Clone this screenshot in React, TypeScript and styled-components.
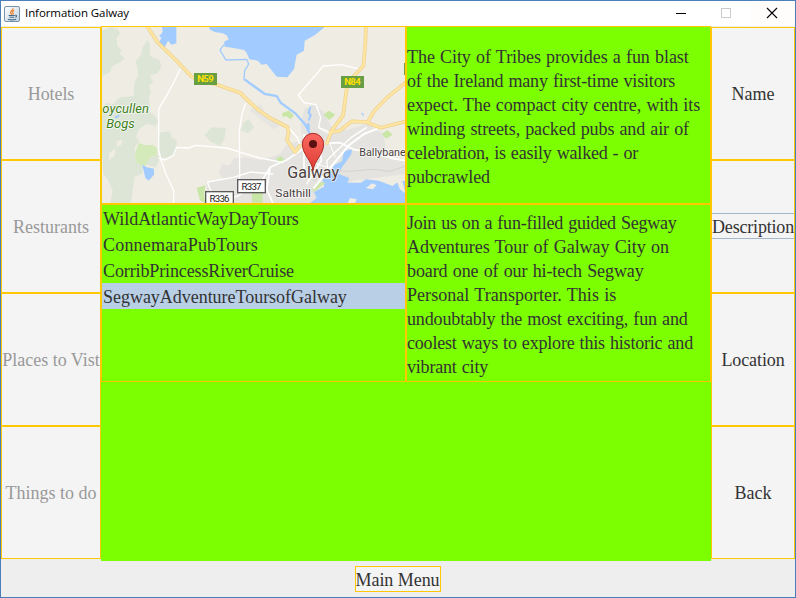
import React from 'react';
import styled, { createGlobalStyle } from 'styled-components';

const ORANGE = '#ffc800';
const LIME = '#7cff00';
const PANEL = '#eeeeee';

const GlobalStyle = createGlobalStyle`
  html, body, #root { height: 100%; }
  body { margin: 0; overflow: hidden; }
  * { box-sizing: border-box; }
`;

const Window = styled.div`
  width: 796px;
  height: 598px;
  border: 1px solid #4a7fb9;
  background: ${PANEL};
  display: flex;
  flex-direction: column;
  font-family: 'Liberation Serif', 'Times New Roman', serif;
  font-size: 18px;
  color: #333333;
`;

const TitleBar = styled.header`
  height: 25px;
  flex: none;
  background: #ffffff;
  display: flex;
  align-items: center;
  padding-left: 2px;
`;

const Title = styled.h1`
  margin: 0 auto 0 4px;
  padding-bottom: 2px;
  font: 400 11.5px/23px 'Open Sans', 'Noto Sans', sans-serif;
  letter-spacing: -0.08px;
  color: #000000;
`;

const WindowButton = styled.button<{ $tint?: boolean }>`
  width: 45px;
  height: 25px;
  padding: 0;
  border: 0;
  display: flex;
  background: ${(p) => (p.$tint ? '#fffcfc' : 'transparent')};
`;

const Body = styled.main`
  flex: none;
  height: 535px;
  display: grid;
  grid-template-columns: 100px 610px 84px;
`;

const ButtonColumn = styled.nav`
  display: flex;
  flex-direction: column;
  padding-top: 1px;
`;

const SideButton = styled.button`
  height: 133px;
  flex: none;
  margin: 0;
  padding: 52px 0 0;
  border: 1px solid ${ORANGE};
  background: #f4f4f4;
  color: #333333;
  font: inherit;
  display: flex;
  align-items: flex-start;
  justify-content: center;
  overflow: hidden;

  &:disabled {
    color: #999999;
  }
`;

const ButtonLabel = styled.span<{ $spacing?: number; $focused?: boolean }>`
  height: 26px;
  padding-top: 2px;
  line-height: 24px;
  white-space: nowrap;
  letter-spacing: ${(p) => p.$spacing ?? 0}px;
  box-shadow: ${(p) => (p.$focused ? 'inset 0 1px #a3b8cc, inset 0 -1px #a3b8cc' : 'none')};
`;

const Center = styled.section`
  background: ${LIME};
  display: grid;
  grid-template-columns: 305px 305px;
  grid-template-rows: 178px 178px 1fr;
`;

const Cell = styled.div`
  border: 1px solid ${ORANGE};
  overflow: hidden;
`;

const TextCell = styled(Cell)`
  display: flex;
  flex-direction: column;
  justify-content: center;
  padding-top: 4px;
`;

const TextLine = styled.span<{ $spacing: number }>`
  line-height: 24px;
  height: 24px;
  white-space: nowrap;
  word-spacing: 0.8px;
  letter-spacing: ${(p) => p.$spacing}px;
`;

const TourList = styled.ul`
  margin: 0;
  padding: 0;
  list-style: none;
`;

const TourItem = styled.li<{ $spacing: number; $selected?: boolean }>`
  height: 26px;
  padding: 2px 0 0 1px;
  line-height: 24px;
  white-space: nowrap;
  letter-spacing: ${(p) => p.$spacing}px;
  background: ${(p) => (p.$selected ? '#b8cfe5' : 'transparent')};
`;

const BottomBar = styled.footer`
  flex: 1;
  display: flex;
  justify-content: center;
  padding-top: 5px;
`;

const MenuButton = styled.button`
  width: 86px;
  height: 26px;
  margin-right: 1px;
  padding: 1px 0 0;
  border: 1px solid ${ORANGE};
  background: #f4f4f4;
  color: #333333;
  font: inherit;
  line-height: 24px;
  letter-spacing: -0.05px;
  white-space: nowrap;
  overflow: hidden;
`;

const MapSvg = styled.svg`
  display: block;
  width: 303px;
  height: 176px;
`;

const JavaIcon = () => (
  <svg width="18" height="18" viewBox="0 0 18 18">
    <defs>
      <linearGradient id="tile" x1="0" y1="0" x2="1" y2="1">
        <stop offset="0" stopColor="#ffffff" />
        <stop offset="1" stopColor="#c3d3e0" />
      </linearGradient>
    </defs>
    <rect x="1.5" y="1.5" width="15" height="15" rx="1.5" fill="url(#tile)" stroke="#7593ab" />
    <path d="M9.900 3.200c.7 1.900-3.200 2.700-2.300 4.800.2.600.9 1.100 1.300 1.700M11.300 5.300c-1.800.8-2.200 1.600-1.400 2.500.5.7.3 1.200-.2 1.700" fill="none" stroke="#ee7d22" strokeWidth="1.200" />
    <path d="M5.600 10.500h6.200M6.300 12.300h4.800M4.800 14.300c2.400.7 6 .7 8.300 0M12.100 10.300c2-.4 1.800 1.500.2 2" fill="none" stroke="#3f6888" strokeWidth="1.100" />
  </svg>
);

const Shield = ({ x, y, w, h, label, major }: { x: number; y: number; w: number; h: number; label: string; major?: boolean }) => (
  <g>
    <rect x={x} y={y} width={w} height={h} fill={major ? '#689f45' : '#ffffff'} stroke={major ? 'none' : '#5b5b5b'} strokeWidth="4" />
    <text
      x={x + w / 2}
      y={y + h / 2 + 10}
      textAnchor="middle"
      textLength={major ? 50 : 60}
      fontSize={major ? 29 : 29}
      fontWeight={major ? 700 : 400}
      fill={major ? '#ffe000' : '#222222'}
    >
      {label}
    </text>
  </g>
);

const N59 = 'M137 0L172 54L236 117L275 158L282 162L351 182L420 206L450 236L480 262L510 282L562 309L566 326L561 348L585 384L603 362';
const N84 = 'M798 0L796 60L790 126L758 160L740 195L729 275L695 320L679 362';
const EAST = 'M687 325L718 321L755 292L797 294L842 311L922 291M802 296L822 262L862 220L922 172';
const WATER = '#a2ccff';

const GalwayMap = () => (
  <MapSvg viewBox="6 9 909 528" preserveAspectRatio="none" fontFamily="Roboto, sans-serif">
    <defs>
      <linearGradient id="pin" x1="0" y1="0" x2="0" y2="1">
        <stop offset="0" stopColor="#fb6a62" />
        <stop offset="1" stopColor="#dd3b31" />
      </linearGradient>
    </defs>
    <rect x="0" y="0" width="930" height="560" fill="#efece3" />

    {/* bogs and woodland */}
    <g fill="#dde6d6">
      <path d="M6 20L30 10L52 14L60 28L50 44L52 66L65 78L58 90L74 102L60 115L38 125L30 145L6 156Z" />
      <path d="M142 48L150 60L150 96L180 110L184 130L172 148L150 155L160 175L148 182L152 205L146 222L150 242L142 262L160 270L175 290L168 305L140 300L118 315L108 338L118 350L104 370L108 408L130 422L126 450L104 458L98 500L92 540L30 540L38 500L24 468L10 450L6 390V250L22 236L38 240L60 220L100 216L104 175L114 155L112 130L106 115L124 90L128 70Z" />
      <path d="M178 326L210 322L216 342L230 348L228 386L204 402L182 400L176 380Z" />
      <path d="M314 334L334 310L378 312L374 342L360 366L330 352Z" />
      <path d="M432 295L446 286L462 310L444 328L422 318Z" />
      <path d="M134 408L172 392L180 402L168 430L142 424Z" />
    </g>
    <path d="M70 195l16-10 6 12-14 12-10-2zM28 386l18-12-2 22-18 12zM50 352l18-6-4 16-14 8z" fill="#efece3" />

    {/* built-up areas */}
    <g fill="#e4e3e0">
      <path d="M322 540L320 474L368 463L356 445L366 420L388 424L402 402L440 400L482 408L540 390L560 362L606 348L602 300L614 254L640 242L670 262L695 310L740 318L800 300L850 330L862 400L916 410V450L760 470L640 540Z" />
      <path d="M448 258L482 240L500 272L540 306L520 316L480 284Z" opacity=".7" />
    </g>

    {/* parks */}
    <g fill="#c8e6a5">
      <path d="M116 356L136 364L158 362L172 372L170 394L150 400L136 426L110 418L104 394Z" fill="#d5eabb" />
      <path d="M290 492L316 484L312 512L318 540L300 528Z" />
      <path d="M456 508L488 500V536L456 536Z" />
      <path d="M546 268L566 260L582 274L572 286L558 276L548 280Z" />
      <path d="M670 272L686 260L706 272L688 288Z" />
      <path d="M528 404L542 396L554 408L540 420Z" />
      <path d="M846 330L862 318L878 332L858 344Z" />
    </g>

    {/* lakes, river and bay */}
    <g fill={WATER}>
      <path d="M186 9H229V58L214 62L204 50L194 70L178 54L184 42L178 36L188 24Z" />
      <path d="M328 9H674L644 34L614 50L612 80L590 92L582 135L562 160L530 158L500 120L484 122L474 110L448 106L440 86L432 78L400 72L374 68L372 54L386 46L380 34L368 28L344 24L328 16Z" />
      <path d="M127 422L140 430L162 434V452L146 470L136 462Z" />
      <path d="M44 278l12-6 4 4-14 8z" />
      <path d="M628 250l6-4-4 20 6 6-8 20-4-4 4-14-6-8z" />
      <path d="M620 300l8-4 2 20-8 6z" />
      <path d="M782 266l8 2 2 10z" />
      <path d="M626 540L650 522L640 500L666 482L668 466L690 452L702 424L726 412L732 382L756 376L754 390L742 408L728 426L716 450L748 462L742 476L782 476L798 466L836 470L878 486L890 476L916 470V540Z" />
    </g>
    <path d="M372 62L360 78L378 108L440 106L446 120L434 140L432 166L460 184L482 200L494 208" fill="none" stroke={WATER} strokeWidth="4" />
    <path d="M434 166L458 184L494 210L530 216L542 236L586 268L616 302L630 330L634 410" fill="none" stroke={WATER} strokeWidth="7" />
    <path d="M640 490L658 474L672 478L672 488L642 504ZM798 492L816 478L830 484L818 496ZM890 470L908 474L916 508L900 496ZM750 522L770 526L764 540H742Z" fill="#efece3" />
    <path d="M636 494L652 474L678 476L660 490L642 504Z" fill="#cfe5ac" />

    {/* minor roads */}
    <g fill="none" stroke="#ffffff" strokeWidth="4" strokeLinejoin="round">
      <path d="M240 136L218 182L176 256V376L182 404L198 450L222 502L220 540" />
      <path d="M176 402L194 408L220 394L230 370L264 372L288 364L380 372L418 384L480 402L550 416" />
      <path d="M438 236L426 270L418 320L419 470" />
      <path d="M322 474L400 460L452 444L520 450M322 474L334 504M400 520L418 514L430 504" />
      <path d="M780 136L724 122L670 126L595 213L612 236L648 242L662 280L656 310L688 324" />
      <path d="M566 312L592 340L606 380M648 360L720 356L760 376L826 388L880 404L916 410" strokeWidth="5" />
      <path d="M480 480L510 430L560 408L610 374M510 430L500 496L520 540M612 330V440M660 372L664 410L620 480" strokeWidth="5" />
      <path d="M640 494L700 420L746 364L792 330L842 310" strokeWidth="6" />
      <path d="M684 440L680 410L710 380L754 340L800 310" strokeWidth="4" />
      <path d="M656 312L688 330M690 360L706 400M626 410L680 430" strokeWidth="3" />
    </g>
    <path d="M640 472L682 438L750 442L820 436L870 442L916 426" fill="none" stroke="#cccac5" strokeWidth="2" />

    {/* national roads */}
    <g fill="none" strokeLinejoin="round">
      <g stroke="#efcf8c" strokeWidth="11">
        <path d={N59} />
        <path d={N84} />
        <path d={EAST} />
      </g>
      <g stroke="#fde5a2" strokeWidth="7">
        <path d={N59} />
        <path d={N84} />
        <path d={EAST} />
      </g>
    </g>

    <Shield x={282} y={147} w={69} h={36} label="N59" major />
    <Shield x={723} y={156} w={69} h={36} label="N84" major />
    <Shield x={413} y={467} w={83} h={39} label="R337" />
    <Shield x={317} y={503} w={83} h={40} label="R336" />
    <rect x="912" y="117" width="8" height="36" fill="#689f45" />

    {/* place names */}
    <g stroke="#ffffff" strokeOpacity=".75" strokeWidth="5" strokeLinejoin="round" paintOrder="stroke">
      <g fill="#3f8120" fontStyle="italic" fontSize="39">
        <text x="7" y="268" textLength="140">oycullen</text>
        <text x="19" y="313" textLength="85">Bogs</text>
      </g>
      <g fill="#4a403c">
        <text x="562" y="461" fontSize="49" textLength="155" lengthAdjust="spacingAndGlyphs">Galway</text>
        <text x="526" y="518" fontSize="35" textLength="107" lengthAdjust="spacingAndGlyphs">Salthill</text>
        <text x="778" y="395" fontSize="33" textLength="139" lengthAdjust="spacingAndGlyphs">Ballybane</text>
      </g>
    </g>

    {/* location pin */}
    <path d="M639 440C636 410 607 392 607 360A32 32 0 0 1 671 360C671 392 642 410 639 440Z" fill="url(#pin)" stroke="#ad2c24" strokeWidth="3" />
    <circle cx="639" cy="360" r="12" fill="#5a1110" />
  </MapSvg>
);

type Line = [text: string, spacing: number];

const CITY_TEXT: Line[] = [
  ['The City of Tribes provides a fun blast', -0.06],
  ['of the Ireland many first-time visitors', -0.16],
  ['expect. The compact city centre, with its', -0.08],
  ['winding streets, packed pubs and air of', -0.11],
  ['celebration, is easily walked - or', -0.2],
  ['pubcrawled', -0.1],
];

const TOUR_TEXT: Line[] = [
  ['Join us on a fun-filled guided Segway', -0.22],
  ['Adventures Tour of Galway City on', -0.03],
  ['board one of our hi-tech Segway', -0.09],
  ['Personal Transporter. This is', 0.045],
  ['undoubtably the most exciting, fun and', -0.14],
  ['coolest ways to explore this historic and', -0.19],
  ['vibrant city', -0.19],
];

const TOURS: Line[] = [
  ['WildAtlanticWayDayTours', -0.03],
  ['ConnemaraPubTours', 0.19],
  ['CorribPrincessRiverCruise', -0.12],
  ['SegwayAdventureToursofGalway', -0.03],
];

const CATEGORIES: Line[] = [
  ['Hotels', -0.1],
  ['Resturants', 0],
  ['Places to Vist', 0],
  ['Things to do', 0],
];

const ACTIONS: Line[] = [
  ['Name', 0],
  ['Description', -0.18],
  ['Location', -0.1],
  ['Back', 0],
];

const Paragraph = ({ lines }: { lines: Line[] }) => (
  <TextCell>
    {lines.map(([text, spacing]) => (
      <TextLine key={text} $spacing={spacing}>{text}</TextLine>
    ))}
  </TextCell>
);

export default function App() {
  return (
    <>
      <GlobalStyle />
      <Window>
        <TitleBar>
          <JavaIcon />
          <Title>Information Galway</Title>
          <WindowButton aria-label="Minimize">
            <svg width="45" height="25"><path d="M16 12.500h10" stroke="#000" /></svg>
          </WindowButton>
          <WindowButton aria-label="Maximize" disabled>
            <svg width="45" height="25"><rect x="16.500" y="7.500" width="9" height="9" fill="none" stroke="#ccc" /></svg>
          </WindowButton>
          <WindowButton aria-label="Close" $tint>
            <svg width="45" height="25"><path d="M17 7l10 10M27 7L17 17" stroke="#000" strokeWidth="1.100" /></svg>
          </WindowButton>
        </TitleBar>
        <Body>
          <ButtonColumn>
            {CATEGORIES.map(([text, spacing]) => (
              <SideButton key={text} disabled>
                <ButtonLabel $spacing={spacing}>{text}</ButtonLabel>
              </SideButton>
            ))}
          </ButtonColumn>
          <Center>
            <Cell><GalwayMap /></Cell>
            <Paragraph lines={CITY_TEXT} />
            <Cell>
              <TourList>
                {TOURS.map(([text, spacing], i) => (
                  <TourItem key={text} $spacing={spacing} $selected={i === 3}>{text}</TourItem>
                ))}
              </TourList>
            </Cell>
            <Paragraph lines={TOUR_TEXT} />
          </Center>
          <ButtonColumn>
            {ACTIONS.map(([text, spacing]) => (
              <SideButton key={text}>
                <ButtonLabel $spacing={spacing} $focused={text === 'Description'}>{text}</ButtonLabel>
              </SideButton>
            ))}
          </ButtonColumn>
        </Body>
        <BottomBar>
          <MenuButton>Main Menu</MenuButton>
        </BottomBar>
      </Window>
    </>
  );
}
